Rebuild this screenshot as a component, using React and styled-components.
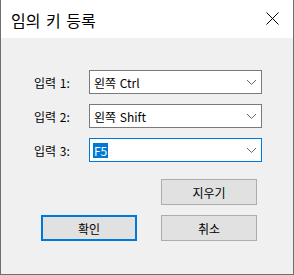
import React from "react";
import styled, { createGlobalStyle } from "styled-components";

const Global = createGlobalStyle`
  html, body { margin: 0; padding: 0; background: #f0f0f0; }
  * { box-sizing: border-box; }
`;

const Window = styled.div`
  width: 294px;
  height: 275px;
  background: #f0f0f0;
  border: 1px solid #6f6f6f;
  border-top: none;
  display: flex;
  flex-direction: column;
  font-family: "Noto Sans CJK KR", "Malgun Gothic", sans-serif;
  color: #000;
`;

const TitleBar = styled.div`
  height: 38px;
  background: #fff;
  display: flex;
  align-items: center;
  justify-content: space-between;
  padding: 0 14px 0 10px;
`;

const Title = styled.div`
  font-size: 16px;
  line-height: 18px;
  word-spacing: 2px;
  margin-top: 2px;
`;

const Close = styled.svg`
  width: 13px;
  height: 13px;
  margin-top: -1px;
`;

const Body = styled.div`
  padding: 32px 0 0 33px;
  display: flex;
  flex-direction: column;
  gap: 10px;
`;

const Row = styled.div`
  display: flex;
  align-items: center;
`;

const Label = styled.div`
  width: 55px;
  font-size: 12px;
  line-height: 15px;
  padding-top: 1px;
  word-spacing: 1px;
`;

const Combo = styled.div`
  width: 173px;
  height: 24px;
  background: #fff;
  border: 1px solid ${(p) => (p.$focus ? "#0078d7" : "#7a7a7a")};
  display: flex;
  align-items: center;
  justify-content: space-between;
  padding: 0 4px 0 3px;
  font-size: 12px;
  line-height: 15px;
`;

const Value = styled.span`
  padding: 0 1px;
  word-spacing: 1px;
  background: ${(p) => (p.$selected ? "#0078d7" : "transparent")};
  color: ${(p) => (p.$selected ? "#fff" : "#000")};
`;

const Chevron = styled.svg`
  width: 11px;
  height: 7px;
`;

const Buttons = styled.div`
  display: grid;
  grid-template-columns: 96px 96px;
  column-gap: 24px;
  row-gap: 10px;
  padding: 17px 0 0 40px;
`;

const Button = styled.div`
  height: 26px;
  display: flex;
  align-items: center;
  justify-content: center;
  background: #e1e1e1;
  border: ${(p) => (p.$default ? "2px solid #0078d7" : "1px solid #adadad")};
  font-size: 12px;
  line-height: 15px;
  grid-column: ${(p) => p.$col};
`;

const ChevronIcon = () => (
  <Chevron viewBox="0 0 11 7">
    <path d="M1 1 L5.5 5.5 L10 1" fill="none" stroke="#666" strokeWidth="1" />
  </Chevron>
);

const inputs = [
  { label: "입력 1:", value: "왼쪽 Ctrl" },
  { label: "입력 2:", value: "왼쪽 Shift" },
  { label: "입력 3:", value: "F5", focus: true },
];

export default function App() {
  return (
    <>
      <Global />
      <Window>
        <TitleBar>
          <Title>임의 키 등록</Title>
          <Close viewBox="0 0 13 13">
            <path d="M0.5 0.5 L12.5 12.5 M12.5 0.5 L0.5 12.5" stroke="#000" strokeWidth="1" />
          </Close>
        </TitleBar>
        <Body>
          {inputs.map((it) => (
            <Row key={it.label}>
              <Label>{it.label}</Label>
              <Combo $focus={it.focus}>
                <Value $selected={it.focus}>{it.value}</Value>
                <ChevronIcon />
              </Combo>
            </Row>
          ))}
        </Body>
        <Buttons>
          <Button $col={2}>지우기</Button>
          <Button $col={1} $default>확인</Button>
          <Button $col={2}>취소</Button>
        </Buttons>
      </Window>
    </>
  );
}
